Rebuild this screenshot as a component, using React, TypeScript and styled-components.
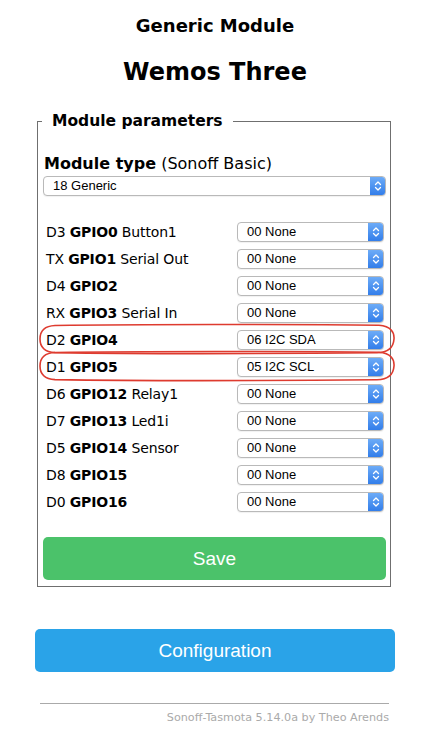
import React from "react";
import styled, { createGlobalStyle } from "styled-components";

const Global = createGlobalStyle`
  * { box-sizing: border-box; }
  html, body { margin: 0; padding: 0; background: #fff; }
  body { font-family: "DejaVu Sans", Verdana, sans-serif; color: #000; }
`;

const Page = styled.div`
  width: 360px;
  margin-left: 35px;
  padding-top: 16px;
`;

const Title = styled.h3`
  margin: 0;
  text-align: center;
  font-size: 18px;
  line-height: 20px;
  font-weight: bold;
`;

const DeviceName = styled.h2`
  margin: 22px 0 0;
  text-align: center;
  font-size: 24px;
  line-height: 28px;
  font-weight: bold;
`;

const Fieldset = styled.fieldset`
  margin: 25px 0 0 2px;
  width: 354px;
  border: 1px solid #6f6f6f;
  padding: 0 4px 6px 5px;
  min-width: 0;
`;

const Legend = styled.legend`
  margin-left: -1px;
  padding: 0 10px;
  font-size: 15.5px;
  line-height: 20px;
  font-weight: bold;
`;

const TypeLabel = styled.div`
  margin-top: 23px;
  font-size: 16px;
  line-height: 20px;
  padding-left: 1px;
`;

const SelectBox = styled.div<{ $width?: number }>`
  position: relative;
  display: flex;
  align-items: center;
  height: 20px;
  width: ${(p) => (p.$width ? `${p.$width}px` : "100%")};
  border: 1px solid #b9b9b9;
  border-radius: 4px;
  background: #fff;
  box-shadow: 0 1px 1px rgba(0, 0, 0, 0.06);
  font-family: "Liberation Sans", Arial, sans-serif;
  font-size: 13px;
  padding-left: 9px;
  overflow: hidden;
`;

const SelectText = styled.span`
  flex: 1;
  line-height: 18px;
`;

const Stepper = styled.span`
  width: 16px;
  align-self: stretch;
  margin: -1px -1px -1px 0;
  border-radius: 0 4px 4px 0;
  background: linear-gradient(#70aef8, #2f7be9);
  display: flex;
  align-items: center;
  justify-content: center;
`;

const TypeSelect = styled(SelectBox)`
  margin-top: 2px;
`;

const Rows = styled.div`
  margin-top: 22.5px;
`;

const Row = styled.div`
  position: relative;
  display: flex;
  align-items: center;
  height: 27px;
  padding: 0 2px 0 3px;
`;

const PinLabel = styled.span`
  flex: 1;
  font-size: 14px;
  letter-spacing: -0.15px;
  line-height: 20px;
  white-space: nowrap;
`;

const Highlight = styled.svg`
  position: absolute;
  left: -4px;
  top: -3px;
  width: 356px;
  height: 30px;
  overflow: visible;
  pointer-events: none;
`;

const Button = styled.button<{ $color: string }>`
  display: block;
  width: 100%;
  height: 43px;
  border: 0;
  border-radius: 5px;
  background: ${(p) => p.$color};
  color: #fff;
  font-family: "Liberation Sans", Arial, sans-serif;
  font-size: 19px;
  padding: 0;
`;

const SaveButton = styled(Button)`
  margin-top: 21.5px;
`;

const ConfigButton = styled(Button)`
  margin-top: 42px;
`;

const Rule = styled.hr`
  margin: 31px 6px 0 5px;
  border: 0;
  border-top: 1px solid #aaa;
  height: 0;
`;

const Footer = styled.div`
  margin: 7px 6px 0 0;
  text-align: right;
  font-size: 11.2px;
  line-height: 14px;
  color: #aaa;
`;

const Chevrons = () => (
  <svg width="8" height="12" viewBox="0 0 8 12">
    <path d="M1.5 4.5 L4 2 L6.5 4.5 M1.5 7.5 L4 10 L6.5 7.5" fill="none" stroke="#fff" strokeWidth="1.3" strokeLinecap="round" strokeLinejoin="round" />
  </svg>
);

const Select = ({ value, width }: { value: string; width?: number }) => (
  <SelectBox $width={width}>
    <SelectText>{value}</SelectText>
    <Stepper>
      <Chevrons />
    </Stepper>
  </SelectBox>
);

const pins: { pre: string; gpio: string; post?: string; value: string; mark?: boolean }[] = [
  { pre: "D3", gpio: "GPIO0", post: "Button1", value: "00 None" },
  { pre: "TX", gpio: "GPIO1", post: "Serial Out", value: "00 None" },
  { pre: "D4", gpio: "GPIO2", value: "00 None" },
  { pre: "RX", gpio: "GPIO3", post: "Serial In", value: "00 None" },
  { pre: "D2", gpio: "GPIO4", value: "06 I2C SDA", mark: true },
  { pre: "D1", gpio: "GPIO5", value: "05 I2C SCL", mark: true },
  { pre: "D6", gpio: "GPIO12", post: "Relay1", value: "00 None" },
  { pre: "D7", gpio: "GPIO13", post: "Led1i", value: "00 None" },
  { pre: "D5", gpio: "GPIO14", post: "Sensor", value: "00 None" },
  { pre: "D8", gpio: "GPIO15", value: "00 None" },
  { pre: "D0", gpio: "GPIO16", value: "00 None" },
];

export default function App() {
  return (
    <>
      <Global />
      <Page>
        <Title>Generic Module</Title>
        <DeviceName>Wemos Three</DeviceName>
        <Fieldset>
          <Legend>Module parameters</Legend>
          <TypeLabel>
            <b>Module type</b> (Sonoff Basic)
          </TypeLabel>
          <TypeSelect>
            <SelectText>18 Generic</SelectText>
            <Stepper>
              <Chevrons />
            </Stepper>
          </TypeSelect>
          <Rows>
            {pins.map((p) => (
              <Row key={p.gpio}>
                <PinLabel>
                  {p.pre} <b>{p.gpio}</b>
                  {p.post ? ` ${p.post}` : ""}
                </PinLabel>
                <Select value={p.value} width={147} />
                {p.mark && (
                  <Highlight viewBox="0 0 356 30">
                    <path
                      d="M16 1.5 C90 0.5 260 0 340 1.2 C352 2 355.5 8.5 355 15 C354.5 22.5 350 28.5 338 28.8 C250 29.5 90 29.8 16 28.6 C5 28 1 22.5 1 15 C1 7.5 5 2 16 1.5 Z"
                      fill="none"
                      stroke="#de3b2f"
                      strokeWidth="1.6"
                    />
                  </Highlight>
                )}
              </Row>
            ))}
          </Rows>
          <SaveButton $color="#4bc26a">Save</SaveButton>
        </Fieldset>
        <ConfigButton $color="#2aa3e8">Configuration</ConfigButton>
        <Rule />
        <Footer>Sonoff-Tasmota 5.14.0a by Theo Arends</Footer>
      </Page>
    </>
  );
}
